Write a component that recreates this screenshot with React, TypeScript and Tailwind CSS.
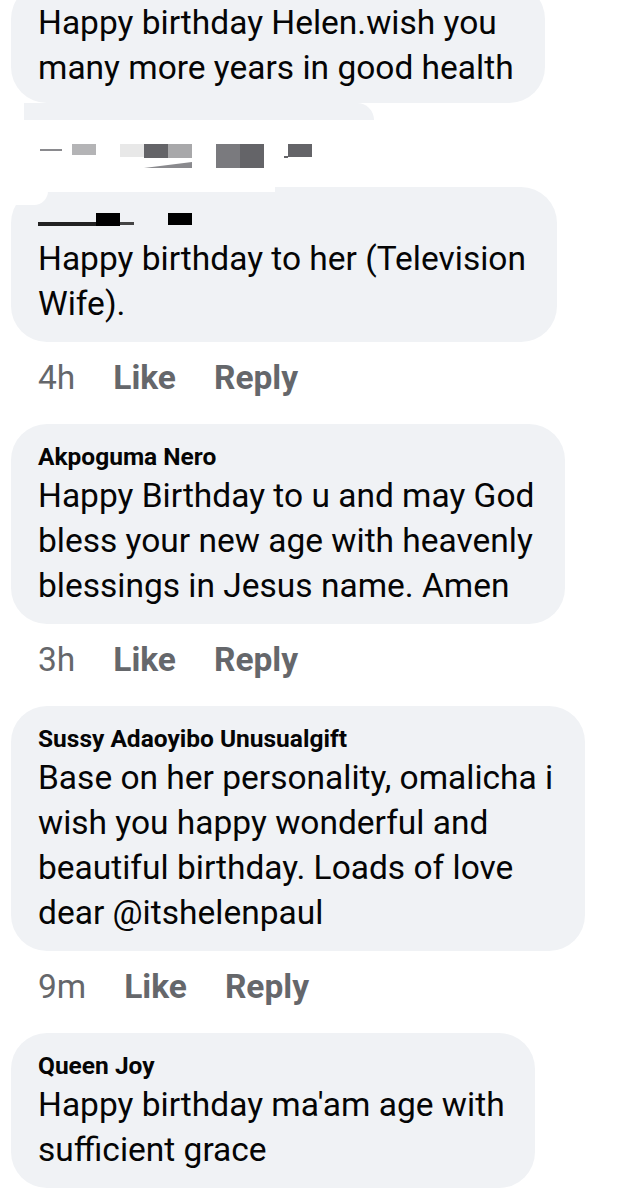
import React from "react"

type Comment = {
  name?: string
  lines: string[]
  width: string
  time?: string
}

function Meta({ time }: { time: string }) {
  return (
    <div className="mt-[14px] mb-[24px] flex h-[44px] items-center gap-[38px] pl-[27px] text-[33.5px] text-[#65676b]">
      <span>{time}</span>
      <span className="font-bold">Like</span>
      <span className="font-bold">Reply</span>
    </div>
  )
}

function Bubble({ c }: { c: Comment }) {
  return (
    <div className={`${c.width} rounded-[36px] bg-[#f0f2f5] px-[27px] pt-[17px] pb-[16px]`}>
      {c.name && <div className="text-[24.5px] leading-[32px] font-bold text-[#050505]">{c.name}</div>}
      <div className="text-[33.5px] leading-[45px] text-[#050505]">
        {c.lines.map((l) => (
          <div key={l}>{l}</div>
        ))}
      </div>
    </div>
  )
}

const comments: Comment[] = [
  {
    name: "Akpoguma Nero",
    lines: ["Happy Birthday to u and may God", "bless your new age with heavenly", "blessings in Jesus name. Amen"],
    width: "w-[554px]",
    time: "3h",
  },
  {
    name: "Sussy Adaoyibo Unusualgift",
    lines: ["Base on her personality, omalicha i", "wish you happy wonderful and", "beautiful birthday. Loads of love", "dear @itshelenpaul"],
    width: "w-[574px]",
    time: "9m",
  },
  {
    name: "Queen Joy",
    lines: ["Happy birthday ma'am age with", "sufficient grace"],
    width: "w-[524px]",
  },
]

export default function App() {
  return (
    <div className="h-[1196px] w-[618px] overflow-hidden bg-white pl-[11px] font-['Roboto',sans-serif]">
      {/* first bubble, cut off at the top */}
      <div className="-mt-[17px] w-[534px] rounded-[36px] bg-[#f0f2f5] px-[27px] pt-[17px] pb-[13px] text-[33.5px] leading-[45px] text-[#050505]">
        <div>Happy birthday Helen.wish you</div>
        <div>many more years in good health</div>
      </div>

      {/* redacted author of the second comment */}
      <div className="h-[84px]">
        <div className="ml-[13px] h-[17px] w-[350px] rounded-tr-[20px] bg-[#f0f2f5]" />
        <div className="mt-[24px] flex items-start">
          <div className="mt-[5px] ml-[29px] h-[2px] w-[22px] bg-[#8a8a8e]" />
          <div className="ml-[10px] h-[11px] w-[24px] bg-[#b4b4b6]" />
          <div className="ml-[24px] h-[13px] w-[24px] bg-[#e8e8e8]" />
          <div className="flex flex-col">
            <div className="flex">
              <div className="h-[14px] w-[24px] bg-[#646468]" />
              <div className="h-[14px] w-[24px] bg-[#a8a8aa]" />
            </div>
            <div className="h-[10px] w-[48px] bg-[#8a8a8e] [clip-path:polygon(0_100%,100%_40%,100%_100%)]" />
          </div>
          <div className="ml-[24px] h-[24px] w-[24px] bg-[#7a7a7e]" />
          <div className="h-[24px] w-[24px] bg-[#646468]" />
          <div className="mt-[12px] ml-[20px] h-[2px] w-[4px] bg-[#646468]" />
          <div className="h-[13px] w-[24px] bg-[#646468]" />
        </div>
      </div>

      {/* second bubble with redacted name */}
      <div className="relative w-[546px] rounded-[36px] bg-[#f0f2f5] px-[27px] pt-[17px] pb-[16px]">
        <div className="absolute top-0 left-0 h-[5px] w-[264px] bg-white" />
        <div className="absolute top-0 left-0 h-[18px] w-[37px] rounded-br-[14px] bg-white" />
        <div className="flex h-[32px] items-start pt-[9px]">
          <div className="mt-[9px] h-[4px] w-[58px] bg-[#222]" />
          <div className="h-[13px] w-[24px] bg-black" />
          <div className="mt-[9px] h-[3px] w-[14px] bg-[#444]" />
          <div className="ml-[34px] h-[12px] w-[24px] bg-black" />
        </div>
        <div className="text-[33.5px] leading-[45px] text-[#050505]">
          <div>Happy birthday to her (Television</div>
          <div>Wife).</div>
        </div>
      </div>
      <Meta time="4h" />

      {comments.map((c) => (
        <div key={c.name}>
          <Bubble c={c} />
          {c.time && <Meta time={c.time} />}
        </div>
      ))}
    </div>
  )
}
